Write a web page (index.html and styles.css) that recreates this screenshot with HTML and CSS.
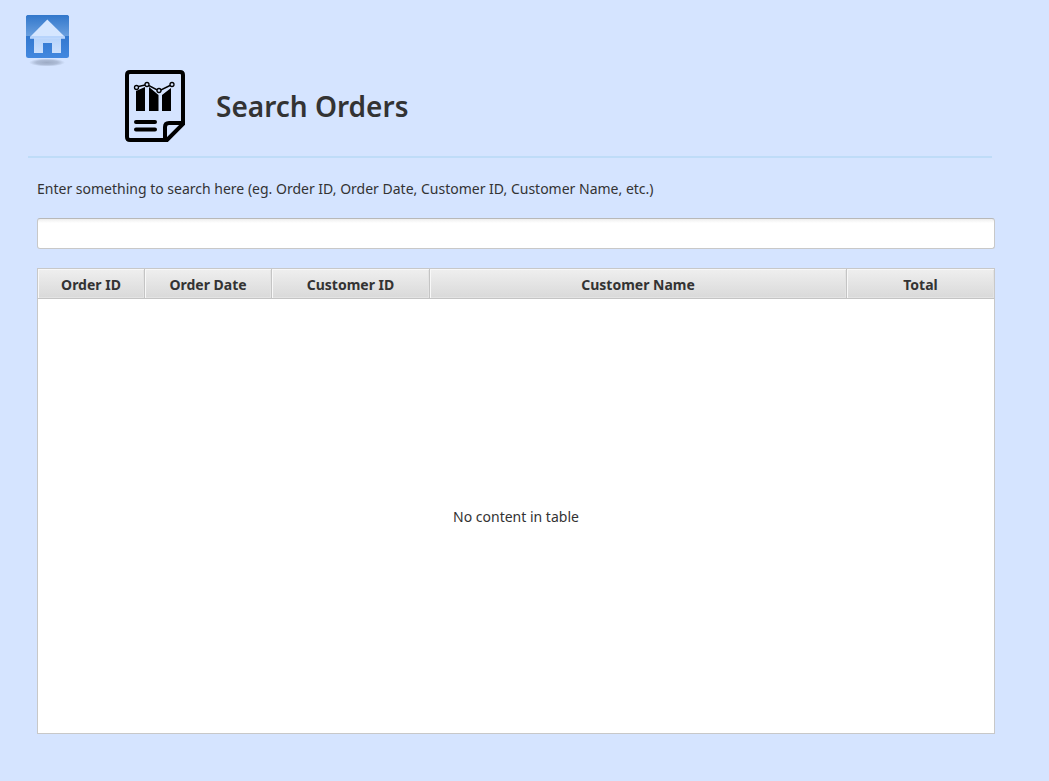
FILE: index.html
```html
<!DOCTYPE html>
<html lang="en">
<head>
<meta charset="utf-8">
<title>Search Orders</title>
<link rel="stylesheet" href="styles.css">
</head>
<body>
<div class="page">
  <header class="header">
    <button class="home" type="button" aria-label="Home">
      <svg width="45" height="54" viewBox="0 0 45 54">
        <defs>
          <linearGradient id="top" x1="0" y1="0" x2="0" y2="1"><stop offset="0" stop-color="#3277cb"/><stop offset="1" stop-color="#699fdf"/></linearGradient>
          <linearGradient id="low" x1="0" y1="0" x2="0" y2="1"><stop offset="0" stop-color="#2268c0"/><stop offset="1" stop-color="#4388df"/></linearGradient>
          <linearGradient id="base" x1="0" y1="0" x2="0" y2="1"><stop offset="0" stop-color="#b5d3fb"/><stop offset="1" stop-color="#cde0fc"/></linearGradient>
          <radialGradient id="shade"><stop offset="0" stop-color="#64718a" stop-opacity=".5"/><stop offset=".6" stop-color="#64718a" stop-opacity=".35"/><stop offset="1" stop-color="#64718a" stop-opacity="0"/></radialGradient>
        </defs>
        <ellipse cx="22" cy="48.500" rx="18" ry="4" fill="url(#shade)"/>
        <rect x="1" y="1" width="43" height="43" rx="2.500" fill="url(#low)"/>
        <path d="M1 22V3.500Q1 1 3.500 1H41.500Q44 1 44 3.500V22Z" fill="url(#top)"/>
        <path d="M9 23H36V39H27V29H18V39H9Z" fill="url(#base)"/>
        <path d="M22.300 5.500L40 23V24.500H5V23Z" fill="#d5e6ff"/>
        <path d="M6.500 22H39L40 23V24.500H5V23Z" fill="#b7d4fc"/>
      </svg>
    </button>
    <div class="heading">
      <svg class="report" width="60" height="72" viewBox="0 0 60 72" aria-hidden="true">
        <path d="M5 2H55Q58 2 58 5V54L42 70H5Q2 70 2 67V5Q2 2 5 2Z" fill="none" stroke="#000" stroke-width="4"/>
        <path d="M58 53H44Q40 53 40 57V70" fill="none" stroke="#000" stroke-width="4"/>
        <path d="M11 21L20 17V41H11ZM24 17L33.500 25V41H24ZM37 25L46 18V41H37Z"/>
        <path d="M11.500 17L22 14.500L34 21L47 14.500" fill="none" stroke="#000" stroke-width="1.500"/>
        <g fill="#d5e4ff" stroke="#000" stroke-width="1.300"><circle cx="11.500" cy="17.500" r="2"/><circle cx="22" cy="14.500" r="2"/><circle cx="34" cy="20.500" r="2"/><circle cx="47" cy="14.500" r="2"/></g>
        <path d="M11 52H30M11 59.500H30" stroke="#000" stroke-width="4" stroke-linecap="round"/>
      </svg>
      <h1 class="title">Search Orders</h1>
    </div>
  </header>
  <main class="content">
    <label class="label" for="query">Enter something to search here (eg. Order ID, Order Date, Customer ID, Customer Name, etc.)</label>
    <input class="query" id="query" type="text">
    <div class="table-box">
      <table class="orders">
        <colgroup><col class="c-id"><col class="c-date"><col class="c-customer"><col><col class="c-total"></colgroup>
        <thead>
          <tr><th scope="col">Order ID</th><th scope="col">Order Date</th><th scope="col">Customer ID</th><th scope="col">Customer Name</th><th scope="col">Total</th></tr>
        </thead>
        <tbody>
          <tr><td colspan="5">No content in table</td></tr>
        </tbody>
      </table>
    </div>
  </main>
</div>
</body>
</html>
```
FILE: styles.css
```css
* { box-sizing: border-box; }
body {
  margin: 0;
  background: #d5e4ff;
  color: #333;
  font: 14px/20px "Noto Sans", "Open Sans", sans-serif;
}
.page {
  display: flex;
  flex-direction: column;
  min-height: 100vh;
  padding: 14px 54px 47px 25px;
}
.header {
  display: flex;
  align-items: flex-start;
  margin: 0 3px 0 3px;
  padding-bottom: 14px;
  border-bottom: 2px solid #bfdcf8;
}
.home {
  display: block;
  margin-left: -3px;
  padding: 0;
  border: 0;
  background: none;
}
.home svg, .report { display: block; }
.heading {
  display: flex;
  align-items: center;
  gap: 31px;
  margin: 56px 0 0 55px;
}
.title {
  margin: 0;
  font-size: 28px;
  line-height: 36px;
  font-weight: 600;
}
.content {
  flex: 1;
  display: flex;
  flex-direction: column;
  padding: 21px 0 0 12px;
}
.label { margin-bottom: 19px; }
.query {
  width: 100%;
  height: 31px;
  margin-bottom: 19px;
  padding: 4px 8px;
  border: 1px solid #c8c8c8;
  border-top-color: #b8b8b8;
  border-radius: 3px;
  background: linear-gradient(#eee, #fff 4px);
  font: inherit;
  color: inherit;
}
.table-box {
  flex: 1;
  display: grid;
  border: 1px solid #c8c8c8;
  background: #fff;
}
.orders {
  width: 100%;
  height: 100%;
  table-layout: fixed;
  border-collapse: separate;
  border-spacing: 0;
}
.c-id { width: 107px; }
.c-date { width: 127px; }
.c-customer { width: 158px; }
.c-total { width: 147px; }
th {
  height: 30px;
  padding: 2px 0 0;
  border-right: 1px solid #c4c4c4;
  border-bottom: 1px solid #c4c4c4;
  background: linear-gradient(#efefef, #d9d9d9);
  box-shadow: inset 1px 1px #f8f8f8, inset -1px -1px #e3e3e3;
  font-weight: 700;
}
th:last-child { border-right: 0; }
td {
  padding: 2px 0 0;
  text-align: center;
  vertical-align: middle;
}
```
